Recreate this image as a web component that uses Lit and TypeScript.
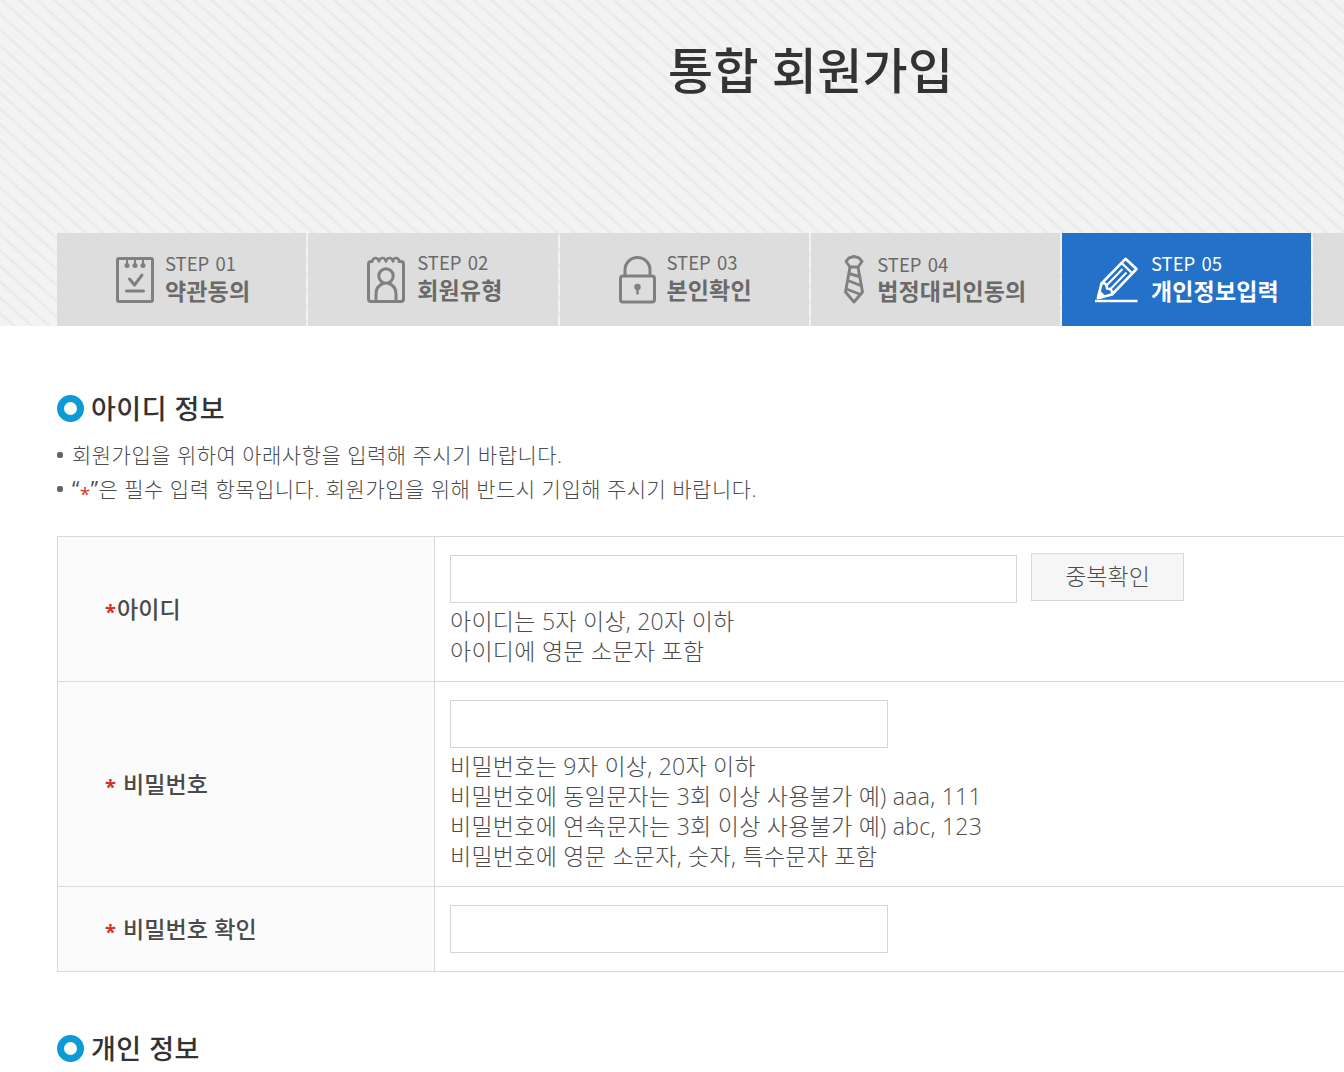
import { LitElement, html, svg, css } from "lit";
import { customElement } from "lit/decorators.js";

const icons = {
  terms: svg`<svg width="38" height="46" viewBox="0 0 38 46" fill="none" stroke="currentColor" stroke-width="3" stroke-linecap="round" stroke-linejoin="round">
    <rect x="1.500" y="1.500" width="35" height="43" rx="1.500"/>
    <path d="M11 2v6M19 2v6M27 2v6" stroke-width="2"/>
    <g fill="currentColor" stroke="none"><circle cx="11" cy="8.500" r="2.500"/><circle cx="19" cy="8.500" r="2.500"/><circle cx="27" cy="8.500" r="2.500"/></g>
    <path d="M13.500 22l5 6 7.500-10M10.500 34h17"/></svg>`,
  member: svg`<svg width="38" height="47" viewBox="0 0 38 47" fill="none" stroke="currentColor" stroke-width="3" stroke-linecap="round" stroke-linejoin="round">
    <path d="M5 5.500H4Q1.500 5.500 1.500 8v35Q1.500 45.500 4 45.500H34Q36.500 45.500 36.500 43V8Q36.500 5.500 34 5.500H32"/>
    <path d="M5 5.500Q6 2 8.500 2T12 5.500Q12.800 2 15.500 2T19 5.500Q19.800 2 22.500 2T26 5.500Q26.500 2 29 2T32.500 5.500" stroke-width="2.600"/>
    <circle cx="19" cy="20" r="7.200"/><path d="M9 45v-7q0-7.500 7-10.500M29 45v-7q0-7.500-7-10.500"/></svg>`,
  lock: svg`<svg width="37" height="48" viewBox="0 0 37 48" fill="none" stroke="currentColor" stroke-width="3">
    <rect x="1.500" y="20" width="34" height="26" rx="2.500"/><path d="M6 20v-6a12.500 12.500 0 0 1 25 0v6"/>
    <circle cx="18.500" cy="31" r="3.200" fill="currentColor" stroke="none"/><path d="M18.500 31v7.500" stroke-width="2.400"/></svg>`,
  tie: svg`<svg width="20" height="49" viewBox="0 0 20 49" fill="none" stroke="currentColor" stroke-width="2.900" stroke-linejoin="round">
    <path d="M5 2.800L10 1.500 15 2.800 18 6.500 14 12H6L2 6.500z"/><path d="M6 12L1.500 37 10 47 18.500 37 14 12M5 18.500l10 3M4 25.500l12.500 5M2.500 34l14 5.500"/></svg>`,
  pencil: svg`<svg width="43" height="46" viewBox="0 0 43 46" fill="none" stroke="currentColor" stroke-width="2.600" stroke-linejoin="round">
    <path d="M30.500 1.800L41.500 12 17 37.500 3 41 6.500 26.500z"/><path d="M6.500 26.500Q12 25 12 31.500 18 31.500 17 37.500M26.500 6l11 10.500" stroke-width="2.400"/><path d="M27.500 12L10.500 29.500M31.500 15.500L14.500 33" stroke-width="2"/>
    <path d="M0 44h42.500"/><path d="M3 41l1.500-6 4.500 4.500z" fill="currentColor"/></svg>`,
};

const steps = [
  { n: "STEP 01", t: "약관동의", icon: icons.terms, cls: "s1" },
  { n: "STEP 02", t: "회원유형", icon: icons.member, cls: "s2" },
  { n: "STEP 03", t: "본인확인", icon: icons.lock, cls: "s3" },
  { n: "STEP 04", t: "법정대리인동의", icon: icons.tie, cls: "s4" },
  { n: "STEP 05", t: "개인정보입력", icon: icons.pencil, cls: "s5 on" },
];

@customElement("app-root")
export class AppRoot extends LitElement {
  static styles = css`
    * { box-sizing: border-box; }
    :host { display: block; width: 1344px; height: 1072px; overflow: hidden; background: #fff; color: #4c4c4c;
      font-family: "Open Sans", "Noto Sans CJK KR", sans-serif; font-weight: 300; }
    .hero { height: 326px; padding: 35px 0 0 57px; display: flex; flex-direction: column; justify-content: space-between;
      background: #f3f3f3 repeating-linear-gradient(42deg, #f3f3f3 0, #f3f3f3 7.500px, #e9e9e9 9.300px, #e9e9e9 9.700px, #f3f3f3 11.700px); }
    h1 { margin: 0 0 0 611px; font-size: 49px; line-height: 70px; font-weight: 500; color: #333; white-space: nowrap; letter-spacing: 0.3px; }
    .steps { display: flex; gap: 2px; height: 93px; width: 1287px; overflow: hidden; }
    .step { flex: 0 0 249.250px; display: flex; background: #ddd; color: #6a6a6a; padding-top: 20px; }
    .step svg { flex: none; color: #808080; margin-top: 4px; }
    .step.on { background: #2371c8; color: #fff; }
    .step.on svg { color: #fff; }
    .more { flex: 0 0 249px; background: #ddd; }
    .s1, .s2, .s3 { padding-left: 59px; } .s4, .s5 { padding-left: 33px; }
    .s2 svg { margin-top: 3px; } .s3 svg { margin-top: 3px; } .s4 svg { margin-top: 2px; }
    .words { display: flex; flex-direction: column; margin: -1px 0 0 11px; white-space: nowrap; }
    .s2 .words { margin: -2px 0 0 12px; } .s3 .words { margin-top: -2px; }
    .s4 .words { margin: 0 0 0 13.500px; } .s5 .words { margin-left: 13px; }
    .no { font: 400 18.500px/22px "Noto Sans CJK KR", sans-serif; word-spacing: 2px; }
    .name { margin-top: 1px; font-size: 23px; line-height: 32px; font-weight: 700; letter-spacing: 0.15px; }
    .s4 .name { margin-top: 0; }
    main { padding: 66px 0 0 57px; }
    h2 { margin: 0; display: flex; align-items: center; gap: 7px; height: 32px; font-size: 27px; font-weight: 500; color: #333; letter-spacing: 0.5px; }
    h2 span { margin-top: -2px; }
    .ring { width: 27px; height: 27px; border: 7px solid #0a9bd8; border-radius: 50%; }
    ul { margin: 14px 0 30px; padding: 0; list-style: none; }
    li { display: flex; align-items: center; height: 34px; font-size: 21px; white-space: pre; letter-spacing: 0.48px; }
    li > span { margin-top: -2px; }
    .dot { width: 6px; height: 6px; border-radius: 2px; background: #666; margin-right: 9px; }
    .red { color: #d0312d; }
    .quote { font-weight: 400; }
    li .red { font-size: 19px; font-weight: 400; position: relative; top: 4px; }
    .grid { width: 1400px; border: 1px solid #d9d9d9; margin-bottom: 60px; }
    .row { display: flex; border-top: 1px solid #d9d9d9; }
    .row:first-child { border-top: 0; }
    .label { width: 377px; flex: none; display: flex; align-items: center; padding: 0 0 3px 47px; background: #fbfbfb; border-right: 1px solid #d9d9d9;
      font-size: 23px; font-weight: 500; color: #4a4a4a; white-space: pre; letter-spacing: 0.1px; }
    .label .red { font-size: 20px; font-weight: 700; position: relative; top: 4px; width: 12px; }
    .cell { padding: 18px 0 0 15px; }
    .line { display: flex; gap: 14px; }
    .box { width: 438px; height: 48px; border: 1px solid #d5d5d5; background: #fff; }
    .wide { width: 567px; }
    .btn { width: 153px; height: 48px; margin-top: -2px; border: 1px solid #d9d9d9; background: #f6f6f6; font-size: 23px; line-height: 45px; text-align: center; }
    .help { margin-top: 3px; font-size: 23px; line-height: 30px; white-space: pre; letter-spacing: 0.26px; }
    .r1 { height: 144px; } .r2 { height: 205px; } .r3 { height: 85px; }
  `;
  render() {
    return html`
      <header class="hero">
        <h1>통합 회원가입</h1>
        <nav class="steps">
          ${steps.map((s) => html`<div class="step ${s.cls}">${s.icon}<div class="words"><span class="no">${s.n}</span><span class="name">${s.t}</span></div></div>`)}
          <div class="more"></div>
        </nav>
      </header>
      <main>
        <h2><i class="ring"></i><span>아이디 정보</span></h2>
        <ul>
          <li><i class="dot"></i><span>회원가입을 위하여 아래사항을 입력해 주시기 바랍니다.</span></li>
          <li><i class="dot"></i><span><span class="quote">“<span class="red">*</span>”</span>은 필수 입력 항목입니다. 회원가입을 위해 반드시 기입해 주시기 바랍니다.</span></li>
        </ul>
        <section class="grid">
          <div class="row r1"><div class="label"><span class="red">*</span>아이디</div>
            <div class="cell"><div class="line"><div class="box wide"></div><div class="btn">중복확인</div></div>
              <div class="help">아이디는 5자 이상, 20자 이하<br />아이디에 영문 소문자 포함</div></div></div>
          <div class="row r2"><div class="label"><span class="red">*</span> 비밀번호</div>
            <div class="cell"><div class="box"></div>
              <div class="help">비밀번호는 9자 이상, 20자 이하<br />비밀번호에 동일문자는 3회 이상 사용불가 예) aaa, 111<br />비밀번호에 연속문자는 3회 이상 사용불가 예) abc, 123<br />비밀번호에 영문 소문자, 숫자, 특수문자 포함</div></div></div>
          <div class="row r3"><div class="label"><span class="red">*</span> 비밀번호 확인</div><div class="cell"><div class="box"></div></div></div>
        </section>
        <h2><i class="ring"></i><span>개인 정보</span></h2>
      </main>`;
  }
}
